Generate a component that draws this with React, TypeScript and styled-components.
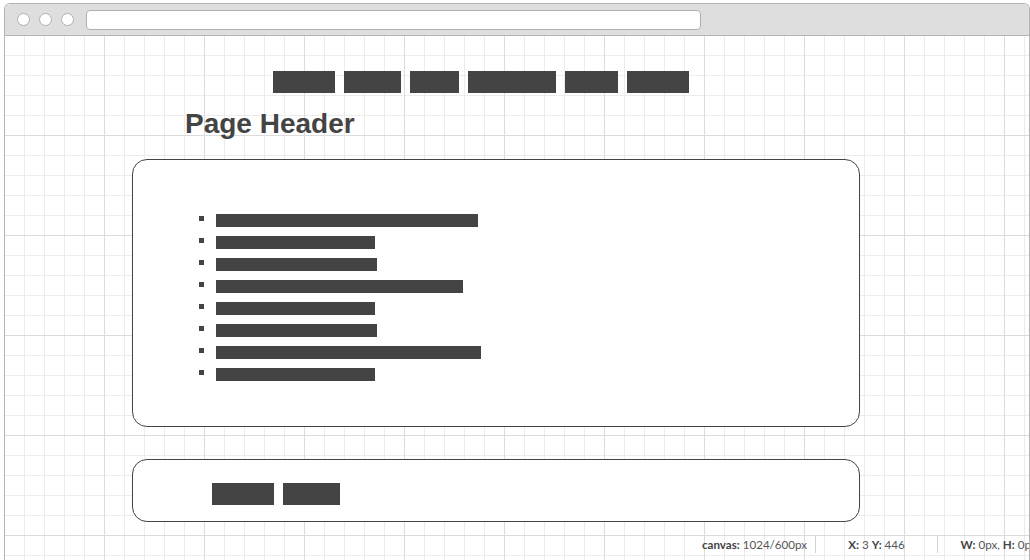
import React from 'react'
import styled, { createGlobalStyle } from 'styled-components'

const GlobalStyle = createGlobalStyle`
  html, body {
    margin: 0;
    padding: 0;
    background: #fff;
    overflow: hidden;
  }
  body {
    font-family: 'Liberation Sans', Arial, sans-serif;
  }
`

const Frame = styled.div`
  margin: 3px 0 0 4px;
  width: 1026px;
  height: 557px;
  box-sizing: border-box;
  border: 1px solid #b4b4b4;
  border-bottom: none;
  border-radius: 6px 6px 0 0;
  display: flex;
  flex-direction: column;
  overflow: hidden;
`

const Chrome = styled.div`
  height: 31px;
  flex: none;
  background: #dedede;
  border-bottom: 1px solid #b4b4b4;
  display: flex;
  align-items: center;
  padding-left: 12px;
  gap: 9px;
`

const Dot = styled.span`
  width: 13px;
  height: 13px;
  box-sizing: border-box;
  border-radius: 50%;
  background: #fff;
  border: 1px solid #b0b0b0;
`

const UrlBar = styled.div`
  margin-left: 3px;
  width: 615px;
  height: 20px;
  box-sizing: border-box;
  background: #fff;
  border: 1px solid #b0b0b0;
  border-radius: 4px;
`

const Canvas = styled.div`
  position: relative;
  flex: 1;
  background-color: #fff;
  background-image:
    linear-gradient(to right, #dcdcdc 1px, transparent 1px),
    linear-gradient(to bottom, #dcdcdc 1px, transparent 1px),
    linear-gradient(to right, #ececec 1px, transparent 1px),
    linear-gradient(to bottom, #ececec 1px, transparent 1px);
  background-size: 100px 100px, 100px 100px, 20px 20px, 20px 20px;
  background-position: 99px 99px, 99px 99px, 19px 19px, 19px 19px;
`

const Nav = styled.nav`
  display: flex;
  gap: 9px;
  padding: 35px 0 0 268px;
`

const Block = styled.span<{ $w: number }>`
  display: block;
  width: ${p => p.$w}px;
  height: 22px;
  background: #444;
`

const Title = styled.h1`
  margin: 15px 0 -1px 180px;
  font-family: 'Liberation Sans', Arial, sans-serif;
  font-weight: bold;
  font-size: 28px;
  line-height: 32px;
  color: #444;
`

const Panel = styled.section<{ $h: number }>`
  margin-left: 127px;
  width: 728px;
  height: ${p => p.$h}px;
  box-sizing: border-box;
  background: #fff;
  border: 1px solid #444;
  border-radius: 15px;
`

const Content = styled(Panel)`
  margin-top: 20px;
  padding: 54px 0 0 66px;
`

const Footer = styled(Panel)`
  margin-top: 32px;
  display: flex;
  gap: 9px;
  padding: 23px 0 0 79px;
`

const List = styled.ul`
  margin: 0;
  padding: 0;
  list-style: none;
  display: flex;
  flex-direction: column;
  gap: 9px;
`

const Item = styled.li`
  display: flex;
  align-items: flex-start;
  gap: 12px;
`

const Bullet = styled.span`
  width: 5px;
  height: 5px;
  margin-top: 2px;
  background: #444;
`

const Bar = styled.span<{ $w: number }>`
  display: block;
  width: ${p => p.$w}px;
  height: 13px;
  background: #444;
`

const StatusBar = styled.div`
  position: absolute;
  left: 689px;
  bottom: 7px;
  display: flex;
  white-space: nowrap;
  font-family: Lato, 'Liberation Sans', sans-serif;
  font-size: 11.6px;
  line-height: 17px;
  color: #555;
`

const Cell = styled.div`
  width: 121px;
  text-align: center;
  border-right: 1px solid #d4d4d4;
  &:last-child {
    border-right: none;
  }
  b {
    font-weight: bold;
    color: #444;
  }
`

const navItems = [62, 57, 49, 88, 53, 62]
const rows = [262, 159, 161, 247, 159, 161, 265, 159]

export default function App() {
  return (
    <>
      <GlobalStyle />
      <Frame>
        <Chrome>
          <Dot />
          <Dot />
          <Dot />
          <UrlBar />
        </Chrome>
        <Canvas>
          <Nav>
            {navItems.map((w, i) => (
              <Block key={i} $w={w} />
            ))}
          </Nav>
          <Title>Page Header</Title>
          <Content $h={268}>
            <List>
              {rows.map((w, i) => (
                <Item key={i}>
                  <Bullet />
                  <Bar $w={w} />
                </Item>
              ))}
            </List>
          </Content>
          <Footer $h={63}>
            <Block $w={62} />
            <Block $w={57} />
          </Footer>
          <StatusBar>
            <Cell>
              <b>canvas:</b> 1024/600px
            </Cell>
            <Cell>
              <b>X:</b> 3 <b>Y:</b> 446
            </Cell>
            <Cell>
              <b>W:</b> 0px, <b>H:</b> 0px
            </Cell>
          </StatusBar>
        </Canvas>
      </Frame>
    </>
  )
}
